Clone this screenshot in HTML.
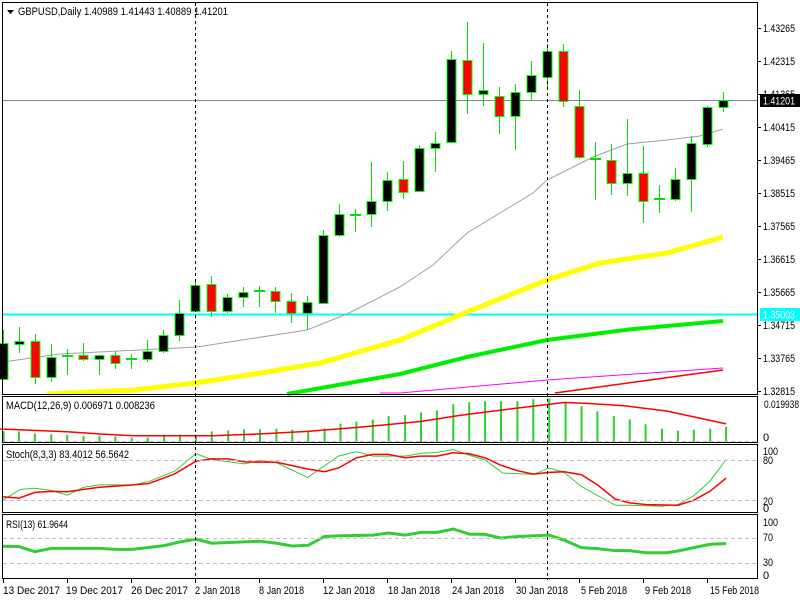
<!DOCTYPE html>
<html><head><meta charset="utf-8"><style>
html,body{margin:0;padding:0;background:#fff;width:800px;height:600px;overflow:hidden}
svg{display:block}
text{font-family:"Liberation Sans",sans-serif;font-size:11px;fill:#000}
</style></head><body>
<svg width="800" height="600" viewBox="0 0 800 600" xmlns="http://www.w3.org/2000/svg">
<rect width="800" height="600" fill="#fff"/>
<line x1="2" y1="100.5" x2="757" y2="100.5" stroke="#778899" stroke-width="1"/>
<line x1="2" y1="314.5" x2="757" y2="314.5" stroke="#00ffff" stroke-width="2"/>
<polyline fill="none" stroke="#a0a0a0" stroke-width="1" points="3,362 60,354 197,347 307,330 347,314 400,287 433,265 467,233 500,213 533,193 547,180 593,157 627,144 667,140 700,136 723,129"/>
<polyline fill="none" stroke="#ffff00" stroke-width="5" points="47,394 133,390 195,383 267,372 320,363 400,340 467,312 547,280 600,263 667,253 723,237"/>
<polyline fill="none" stroke="#00ee00" stroke-width="4" points="287,394 400,374 467,357 547,340 633,329 723,321"/>
<polyline fill="none" stroke="#ff00ff" stroke-width="1" points="380,393 400,393 547,380 723,368"/>
<polyline fill="none" stroke="#ff0000" stroke-width="1.5" points="555,393 723,370"/>
<path fill="none" stroke="#00e000" stroke-width="1" d="M3.5 330V380 M19.5 327V353 M35.5 334V384 M51.5 344V382 M67.5 349V375 M83.5 343V361 M99.5 355V375 M115.5 351V369 M131.5 354V369 M147.5 340V362 M163.5 330V353 M179.5 300V341 M195.5 282V311 M211.5 276V317 M227.5 294V313 M243.5 287V307 M259.5 286V307 M275.5 287V313 M291.5 293V323 M307.5 296V330 M323.5 230V303 M339.5 204V237 M355.5 209V232 M371.5 162V227 M387.5 172V211 M403.5 161V199 M419.5 145V191 M435.5 132V172 M451.5 51V143 M467.5 22V114 M483.5 43V106 M499.5 87V134 M515.5 84V150 M531.5 61V101 M547.5 44V88 M563.5 44V107 M579.5 90V159 M595.5 142V200 M611.5 144V195 M627.5 119V196 M643.5 146V223 M659.5 185V213 M675.5 168V201 M691.5 136V212 M707.5 106V147 M723.5 92V112"/>
<path fill="none" stroke="#00e000" stroke-width="2" d="M62 356H73 M126 359H137 M254 291H265 M350 215H361 M590 159H601 M654 199H665"/>
<g stroke="#00ff00" stroke-width="1">
<rect x="-1" y="343.5" width="9" height="36" fill="#000"/>
<rect x="15" y="341.5" width="9" height="3" fill="#000"/>
<rect x="31" y="341.5" width="9" height="36" fill="#f00"/>
<rect x="47" y="357.5" width="9" height="20" fill="#000"/>
<rect x="79" y="355.5" width="9" height="4" fill="#f00"/>
<rect x="95" y="355.5" width="9" height="4" fill="#000"/>
<rect x="111" y="355.5" width="9" height="8" fill="#f00"/>
<rect x="143" y="351.5" width="9" height="8" fill="#000"/>
<rect x="159" y="335.5" width="9" height="16" fill="#000"/>
<rect x="175" y="313.5" width="9" height="22" fill="#000"/>
<rect x="191" y="285.5" width="9" height="26" fill="#000"/>
<rect x="207" y="284.5" width="9" height="27" fill="#f00"/>
<rect x="223" y="297.5" width="9" height="14" fill="#000"/>
<rect x="239" y="292.5" width="9" height="5" fill="#000"/>
<rect x="271" y="291.5" width="9" height="10" fill="#f00"/>
<rect x="287" y="301.5" width="9" height="12" fill="#f00"/>
<rect x="303" y="302.5" width="9" height="11" fill="#000"/>
<rect x="319" y="235.5" width="9" height="68" fill="#000"/>
<rect x="335" y="214.5" width="9" height="21" fill="#000"/>
<rect x="367" y="201.5" width="9" height="13" fill="#000"/>
<rect x="383" y="180.5" width="9" height="21" fill="#000"/>
<rect x="399" y="179.5" width="9" height="13" fill="#f00"/>
<rect x="415" y="148.5" width="9" height="43" fill="#000"/>
<rect x="431" y="143.5" width="9" height="5" fill="#000"/>
<rect x="447" y="59.5" width="9" height="83" fill="#000"/>
<rect x="463" y="60.5" width="9" height="34" fill="#f00"/>
<rect x="479" y="90.5" width="9" height="4" fill="#000"/>
<rect x="495" y="96.5" width="9" height="20" fill="#f00"/>
<rect x="511" y="92.5" width="9" height="24" fill="#000"/>
<rect x="527" y="75.5" width="9" height="17" fill="#000"/>
<rect x="543" y="51.5" width="9" height="26" fill="#000"/>
<rect x="559" y="51.5" width="9" height="50" fill="#f00"/>
<rect x="575" y="106.5" width="9" height="51" fill="#f00"/>
<rect x="607" y="160.5" width="9" height="23" fill="#f00"/>
<rect x="623" y="173.5" width="9" height="10" fill="#000"/>
<rect x="639" y="173.5" width="9" height="28" fill="#f00"/>
<rect x="671" y="179.5" width="9" height="20" fill="#000"/>
<rect x="687" y="143.5" width="9" height="36" fill="#000"/>
<rect x="703" y="107.5" width="9" height="37" fill="#000"/>
<rect x="719" y="100.5" width="9" height="7" fill="#000"/>
</g>
<g transform="translate(0,390) scale(0.5128,0.339)">
<path fill="none" stroke="#32cd32" stroke-width="2" vector-effect="non-scaling-stroke" d="M7 155V122 M37 155V122 M68 155V128 M100 155V130 M131 155V132 M163 155V135 M194 155V135 M225 155V137 M257 155V140 M288 155V140 M320 155V135 M351 155V132 M382 155V132 M413 155V122 M445 155V119 M476 155V116 M507 155V116 M539 155V114 M570 155V117 M601 155V122 M633 155V114 M664 155V99 M695 155V93 M727 155V87 M758 155V77 M790 155V74 M821 155V66 M852 155V60 M884 155V42 M915 155V36 M946 155V33 M977 155V33 M1009 155V33 M1040 155V27 M1071 155V25 M1103 155V35 M1134 155V48 M1165 155V63 M1197 155V77 M1228 155V87 M1259 155V101 M1291 155V114 M1322 155V120 M1353 155V117 M1385 155V114 M1416 155V108"/>
<polyline fill="none" stroke="#ff0000" stroke-width="1.5" vector-effect="non-scaling-stroke" points="0,115 131,123 200,130 260,135 414,135 500,130 600,122 700,110 820,93 900,74 1000,55 1100,37 1150,40 1220,47 1300,62 1416,100"/>
<polyline fill="none" stroke="#32cd32" stroke-width="1" vector-effect="non-scaling-stroke" points="5,325 40,293 68,290 100,296 131,310 163,287 194,280 260,280 290,270 340,240 382,188 413,205 476,218 510,208 540,215 600,258 660,195 695,182 727,195 790,195 820,187 852,184 884,176 915,192 946,206 980,245 1040,249 1071,230 1100,243 1134,285 1200,340 1228,340 1290,343 1322,338 1353,312 1385,268 1416,205"/>
<polyline fill="none" stroke="#ff0000" stroke-width="1.5" vector-effect="non-scaling-stroke" points="5,315 37,319 68,302 100,299 131,300 163,293 194,287 260,280 290,276 340,248 382,210 413,203 445,203 476,212 540,213 600,233 633,241 660,230 695,200 727,190 758,190 790,200 820,195 852,195 884,185 915,188 946,200 977,222 1009,238 1040,248 1071,243 1100,241 1134,250 1165,280 1200,322 1228,333 1260,338 1322,340 1353,325 1385,298 1416,260"/>
<polyline fill="none" stroke="#32cd32" stroke-width="3" vector-effect="non-scaling-stroke" points="5,461 37,462 68,477 100,467 131,467 194,467 225,470 257,470 288,465 320,459 351,448 382,440 413,452 445,450 476,448 507,446 539,452 570,460 601,458 633,432 664,430 727,428 758,422 790,428 821,420 852,420 884,410 915,425 946,426 977,437 1009,432 1071,428 1100,443 1134,465 1165,468 1200,474 1228,474 1260,480 1300,480 1322,475 1353,465 1385,455 1416,453"/>
</g>
<g stroke="#c0c0c0" stroke-width="1" stroke-dasharray="4,3">
<line x1="3" y1="441.5" x2="757" y2="441.5"/>
<line x1="3" y1="460.5" x2="757" y2="460.5"/>
<line x1="3" y1="500.5" x2="757" y2="500.5"/>
<line x1="3" y1="538.5" x2="757" y2="538.5"/>
<line x1="3" y1="563.5" x2="757" y2="563.5"/>
</g>
<g stroke="#000" stroke-width="1" stroke-dasharray="3,3">
<line x1="195.5" y1="3" x2="195.5" y2="580"/>
<line x1="547.5" y1="3" x2="547.5" y2="580"/>
</g>
<g fill="none" stroke="#000" stroke-width="1">
<rect x="2.5" y="2.5" width="755" height="392"/>
<rect x="2.5" y="396.5" width="755" height="46"/>
<rect x="2.5" y="444.5" width="755" height="68"/>
<rect x="2.5" y="514.5" width="755" height="64"/>
</g>
<path stroke="#000" stroke-width="1" d="M757 28.5h4M757 61.5h4M757 94.5h4M757 127.5h4M757 160.5h4M757 193.5h4M757 226.5h4M757 259.5h4M757 292.5h4M757 325.5h4M757 358.5h4M757 391.5h4 M3.5 579v4M67.5 579v4M131.5 579v4M195.5 579v4M259.5 579v4M323.5 579v4M387.5 579v4M451.5 579v4M515.5 579v4M579.5 579v4M643.5 579v4M707.5 579v4"/>
<g>
<text x="763" y="32" textLength="32" lengthAdjust="spacingAndGlyphs">1.43265</text>
<text x="763" y="65" textLength="32" lengthAdjust="spacingAndGlyphs">1.42315</text>
<text x="763" y="98" textLength="32" lengthAdjust="spacingAndGlyphs">1.41365</text>
<text x="763" y="131" textLength="32" lengthAdjust="spacingAndGlyphs">1.40415</text>
<text x="763" y="164" textLength="32" lengthAdjust="spacingAndGlyphs">1.39465</text>
<text x="763" y="197" textLength="32" lengthAdjust="spacingAndGlyphs">1.38515</text>
<text x="763" y="230" textLength="32" lengthAdjust="spacingAndGlyphs">1.37565</text>
<text x="763" y="263" textLength="32" lengthAdjust="spacingAndGlyphs">1.36615</text>
<text x="763" y="296" textLength="32" lengthAdjust="spacingAndGlyphs">1.35665</text>
<text x="763" y="329" textLength="32" lengthAdjust="spacingAndGlyphs">1.34715</text>
<text x="763" y="362" textLength="32" lengthAdjust="spacingAndGlyphs">1.33765</text>
<text x="763" y="395" textLength="32" lengthAdjust="spacingAndGlyphs">1.32815</text>
</g>
<rect x="760" y="94" width="40" height="13" fill="#000"/>
<text x="763" y="104.5" textLength="32" lengthAdjust="spacingAndGlyphs" style="fill:#fff">1.41201</text>
<rect x="760" y="308" width="40" height="13" fill="#00ffff"/>
<text x="763" y="318.5" textLength="32" lengthAdjust="spacingAndGlyphs" style="fill:#fff">1.35003</text>
<text x="764" y="408" textLength="35" lengthAdjust="spacingAndGlyphs">0.019938</text>
<text x="763" y="441">0</text>
<text x="763" y="455" textLength="15" lengthAdjust="spacingAndGlyphs">100</text>
<text x="763" y="464" textLength="10" lengthAdjust="spacingAndGlyphs">80</text>
<text x="763" y="505" textLength="10" lengthAdjust="spacingAndGlyphs">20</text>
<text x="763" y="512">0</text>
<text x="763" y="526" textLength="15" lengthAdjust="spacingAndGlyphs">100</text>
<text x="763" y="541" textLength="10" lengthAdjust="spacingAndGlyphs">70</text>
<text x="763" y="566" textLength="10" lengthAdjust="spacingAndGlyphs">30</text>
<text x="763" y="579">0</text>
<path d="M7 10h7l-3.5 4z" fill="#000"/>
<text x="18" y="15" textLength="210" lengthAdjust="spacingAndGlyphs">GBPUSD,Daily  1.40989 1.41443 1.40889 1.41201</text>
<text x="6" y="409" textLength="149" lengthAdjust="spacingAndGlyphs">MACD(12,26,9) 0.006971 0.008236</text>
<text x="6" y="458" textLength="123" lengthAdjust="spacingAndGlyphs">Stoch(8,3,3) 83.4012 56.5642</text>
<text x="6" y="528" textLength="62" lengthAdjust="spacingAndGlyphs">RSI(13) 61.9644</text>
<g>
<text x="3" y="594" textLength="57" lengthAdjust="spacingAndGlyphs">13 Dec 2017</text>
<text x="66" y="594" textLength="57" lengthAdjust="spacingAndGlyphs">19 Dec 2017</text>
<text x="131" y="594" textLength="57" lengthAdjust="spacingAndGlyphs">26 Dec 2017</text>
<text x="195" y="594" textLength="45" lengthAdjust="spacingAndGlyphs">2 Jan 2018</text>
<text x="259" y="594" textLength="45" lengthAdjust="spacingAndGlyphs">8 Jan 2018</text>
<text x="323" y="594" textLength="52" lengthAdjust="spacingAndGlyphs">12 Jan 2018</text>
<text x="388" y="594" textLength="52" lengthAdjust="spacingAndGlyphs">18 Jan 2018</text>
<text x="452" y="594" textLength="52" lengthAdjust="spacingAndGlyphs">24 Jan 2018</text>
<text x="516" y="594" textLength="52" lengthAdjust="spacingAndGlyphs">30 Jan 2018</text>
<text x="581" y="594" textLength="46" lengthAdjust="spacingAndGlyphs">5 Feb 2018</text>
<text x="645" y="594" textLength="46" lengthAdjust="spacingAndGlyphs">9 Feb 2018</text>
<text x="710" y="594" textLength="49" lengthAdjust="spacingAndGlyphs">15 Feb 2018</text>
</g>
</svg>
</body></html>
